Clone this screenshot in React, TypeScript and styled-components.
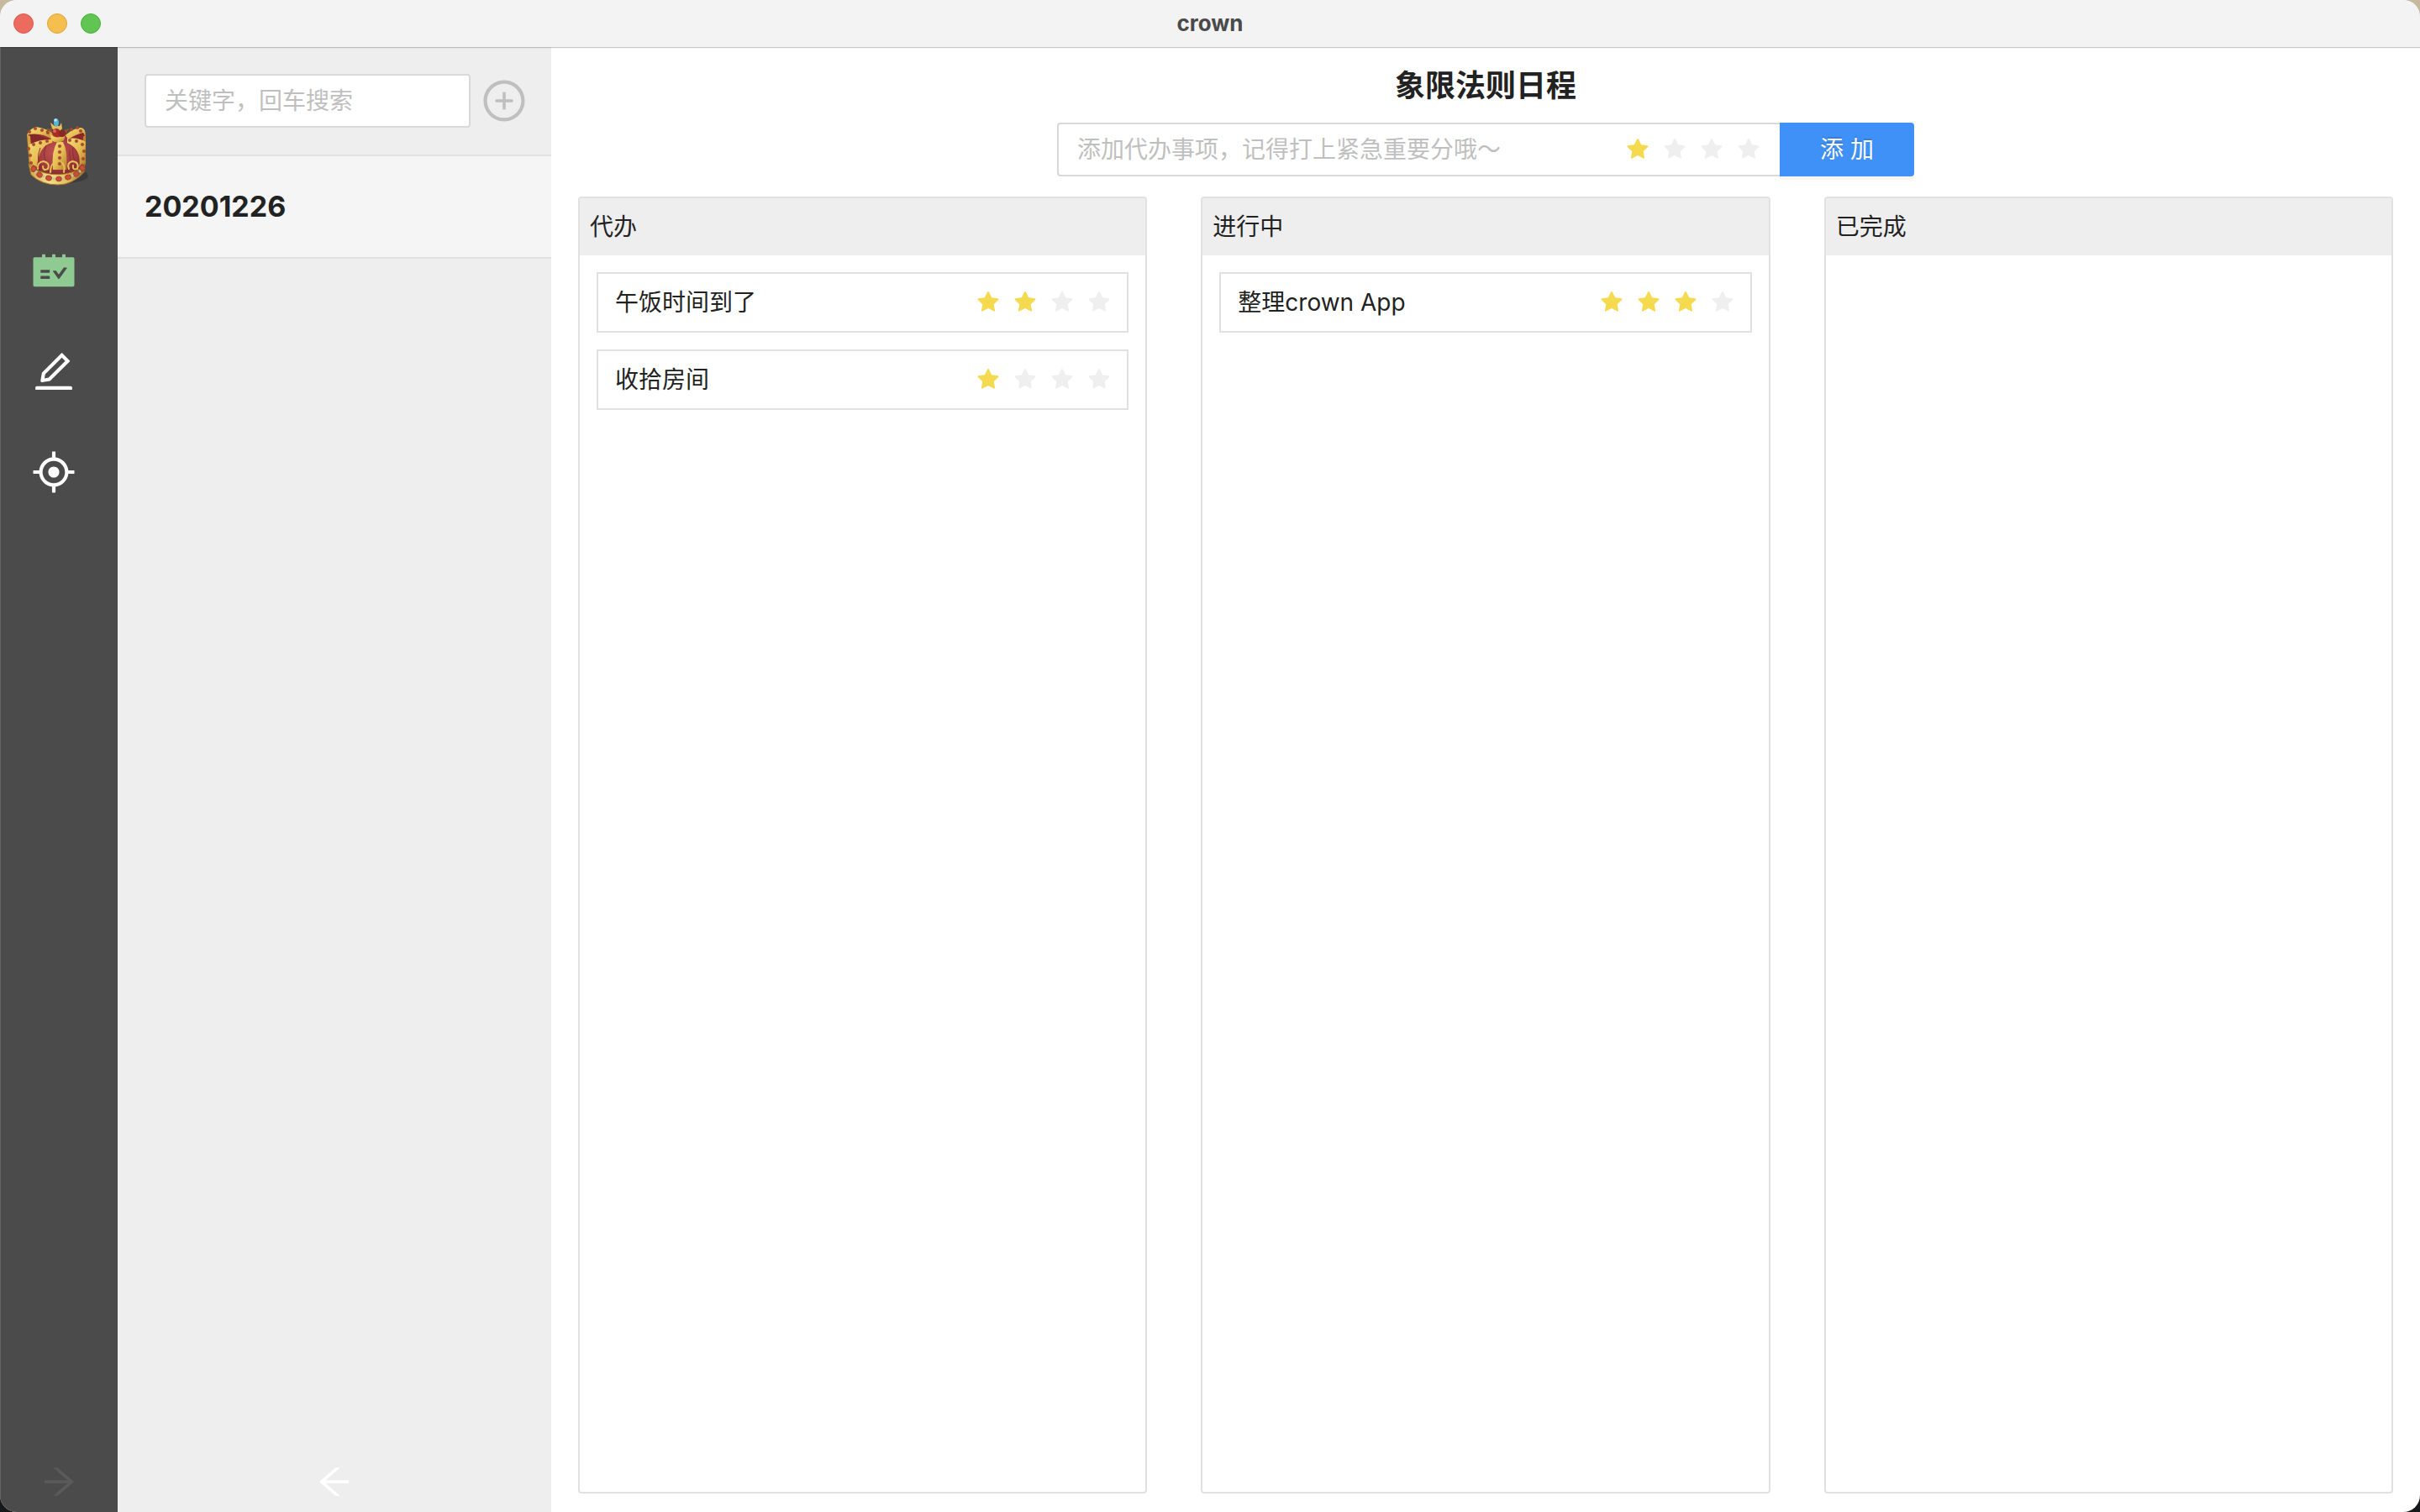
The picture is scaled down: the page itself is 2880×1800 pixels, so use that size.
import React, { useState } from "react";
import styled, { createGlobalStyle } from "styled-components";
import {
  AiFillSchedule,
  AiFillStar,
  AiOutlineAim,
  AiOutlineArrowLeft,
  AiOutlineArrowRight,
  AiOutlineEdit,
  AiOutlinePlusCircle,
} from "react-icons/ai";

const color = {
  text: "#222222",
  muted: "#bfbfbf",
  line: "#e1e1e1",
  inputLine: "#d9d9d9",
  panel: "#eeeeee",
  rail: "#4b4b4b",
  primary: "#4091f7",
  star: "#f5d94e",
  starOff: "#efefef",
  active: "#8fca92",
};

const GlobalStyle = createGlobalStyle`
  *, *::before, *::after { box-sizing: border-box; }
  body {
    margin: 0;
    background: linear-gradient(#c5b9a2 50%, #16181a 50%);
    color: ${color.text};
    font-family: Inter, "Noto Sans CJK SC", sans-serif;
    font-size: 28px;
    line-height: 44px;
  }
  button, input { font: inherit; color: inherit; }
  button { border: 0; padding: 0; background: none; cursor: pointer; }
  h1, h2, p, ul { margin: 0; padding: 0; }
  ul { list-style: none; }
  svg { display: block; }
`;

const Window = styled.div`
  display: flex;
  flex-direction: column;
  height: 100vh;
  overflow: hidden;
  border-radius: 20px;
  background: #ffffff;
`;

const TitleBar = styled.header`
  position: relative;
  display: grid;
  grid-template-columns: 1fr auto 1fr;
  align-items: center;
  flex: none;
  height: 56px;
  padding: 0 16px;
  background: #f3f3f3;
  box-shadow: 0 1px 0 rgba(0, 0, 0, 0.18), 0 2px 0 rgba(0, 0, 0, 0.04);
`;

const Lights = styled.div`
  display: flex;
  gap: 16px;
`;

const Light = styled.button<{ $fill: string; $edge: string }>`
  width: 24px;
  height: 24px;
  border: 1px solid ${(p) => p.$edge};
  border-radius: 50%;
  background: ${(p) => p.$fill};
`;

const WindowTitle = styled.p`
  color: #4a4a4a;
  font-size: 26px;
  font-weight: 700;
`;

const Body = styled.div`
  display: flex;
  flex: 1;
  min-height: 0;
`;

const Rail = styled.nav`
  display: flex;
  flex-direction: column;
  flex: none;
  align-items: flex-start;
  justify-content: space-between;
  width: 140px;
  padding: 82px 0 12px 27px;
  border-left: 1px solid #636363;
  background: ${color.rail};
`;

const RailItems = styled.div`
  display: flex;
  flex-direction: column;
  gap: 64px;
`;

const RailButton = styled.button<{ $active?: boolean }>`
  width: 72px;
  padding: 0 8px;
  color: ${(p) => (p.$active ? color.active : "#ffffff")};
  font-size: 56px;
`;

const Logo = styled.div`
  width: 80px;
  height: 92px;
`;

const Toggle = styled.button<{ $tone: string }>`
  align-self: center;
  color: ${(p) => p.$tone};
  font-size: 48px;
`;

const RailToggle = styled(Toggle)`
  align-self: flex-start;
  margin-left: 18px;
`;

const Side = styled.aside`
  display: flex;
  flex-direction: column;
  flex: none;
  width: 516px;
  padding-bottom: 12px;
  background: ${color.panel};
`;

const SearchBar = styled.form`
  display: flex;
  align-items: center;
  gap: 12px;
  height: 130px;
  padding: 0 28px 0 32px;
  border-bottom: 2px solid ${color.line};
`;

const TextInput = styled.input`
  flex: 1;
  min-width: 0;
  height: 64px;
  padding: 0 22px;
  border: 2px solid ${color.inputLine};
  border-radius: 4px;
  outline: 0;
  background: #ffffff;
  &::placeholder { color: ${color.muted}; opacity: 1; }
`;

const NewButton = styled.button`
  color: ${color.muted};
  font-size: 56px;
`;

const Days = styled.ul`
  flex: 1;
`;

const Day = styled.button`
  display: block;
  width: 100%;
  height: 122px;
  padding: 0 32px;
  border-bottom: 2px solid ${color.line};
  background: #f5f5f5;
  text-align: left;
  font-size: 34px;
  font-weight: 700;
`;

const Main = styled.main`
  display: flex;
  flex: 1;
  flex-direction: column;
  min-width: 0;
  padding: 20px 32px 22px;
`;

const Heading = styled.h1`
  margin-bottom: 18px;
  text-align: center;
  font-size: 36px;
  font-weight: 700;
  line-height: 52px;
`;

const AddForm = styled.form`
  display: flex;
  align-self: center;
  width: 1020px;
  max-width: 100%;
  margin-bottom: 24px;
`;

const AddField = styled.div`
  display: flex;
  flex: 1;
  align-items: center;
  height: 64px;
  padding-right: 22px;
  border: 2px solid ${color.inputLine};
  border-right: 0;
  border-radius: 4px 0 0 4px;
`;

const AddInput = styled(TextInput)`
  height: 60px;
  border: 0;
`;

const AddButton = styled.button`
  width: 160px;
  height: 64px;
  border-radius: 0 4px 4px 0;
  background: ${color.primary};
  box-shadow: 0 4px 0 rgba(0, 0, 0, 0.04);
  color: #ffffff;
  text-shadow: 0 -2px 0 rgba(0, 0, 0, 0.12);
`;

const Board = styled.div`
  display: grid;
  flex: 1;
  grid-template-columns: repeat(3, minmax(0, 1fr));
  gap: 64px;
  min-height: 0;
`;

const Lane = styled.section`
  overflow: hidden;
  border: 2px solid ${color.line};
  border-radius: 4px;
`;

const LaneTitle = styled.h2`
  padding: 12px;
  background: ${color.panel};
  font-size: 28px;
  font-weight: 400;
`;

const Cards = styled.ul`
  display: grid;
  gap: 20px;
  padding: 20px;
`;

const Card = styled.li`
  display: flex;
  align-items: center;
  justify-content: space-between;
  height: 72px;
  padding: 0 18px 0 20px;
  border: 2px solid ${color.line};
`;

const Stars = styled.div`
  display: flex;
  gap: 14px;
`;

const StarButton = styled.button<{ $on: boolean }>`
  color: ${(p) => (p.$on ? color.star : color.starOff)};
  font-size: 30px;
`;

function Rating({ value, onChange }: { value: number; onChange?: (n: number) => void }) {
  return (
    <Stars>
      {[1, 2, 3, 4].map((n) => (
        <StarButton key={n} type="button" $on={n <= value} aria-label={`${n}`} onClick={() => onChange?.(n)}>
          <AiFillStar />
        </StarButton>
      ))}
    </Stars>
  );
}

const beads: [number, number][] = [
  [15, 28], [22, 24], [30, 26], [37, 29], [58, 28], [65, 25], [72, 23], [76, 27],
  [14, 48], [16, 56], [17, 65], [20, 43], [28, 41], [36, 39],
  [51, 45], [51, 52], [51, 59], [51, 66],
  [63, 38], [71, 39], [78, 43], [80, 51], [79, 60], [78, 68],
];

const gems: [number, number, number][] = [
  [20, 72, -60], [27, 79, 35], [38, 83, 15], [50, 84, 0], [61, 82, -15], [71, 78, -35], [78, 71, 60],
];

const pearls: [number, number][] = [[23, 76], [32, 81], [44, 84], [55, 84], [66, 80], [75, 75]];

function Crown() {
  return (
    <svg width="100%" height="100%" viewBox="8 9 80 92" role="img" aria-label="crown">
      <defs>
        <linearGradient id="gold" x1="0" x2="1" y1="0" y2="1">
          <stop offset="0" stopColor="#f3dc7c" />
          <stop offset="0.5" stopColor="#e8bf52" />
          <stop offset="1" stopColor="#b07c2e" />
        </linearGradient>
        <linearGradient id="band" x1="0" x2="1">
          <stop offset="0" stopColor="#d3a141" />
          <stop offset="0.35" stopColor="#f3de8c" />
          <stop offset="0.7" stopColor="#e2bd5c" />
          <stop offset="1" stopColor="#976727" />
        </linearGradient>
        <radialGradient id="velvet" cx="0.5" cy="0.45" r="0.6">
          <stop offset="0" stopColor="#c05552" />
          <stop offset="0.6" stopColor="#a2393c" />
          <stop offset="1" stopColor="#6f2225" />
        </radialGradient>
      </defs>
      <ellipse cx="58" cy="80" rx="27" ry="9" fill="#2f2f2f" opacity="0.55" />
      <path d="M12 31 Q22 24 44 33 L68 29 Q80 23 82 33 L80 72 Q50 92 16 72Z" fill="url(#velvet)" />
      <path d="M14 33 L25 32 L42 37 L17 42Z" fill="#84262a" />
      <path d="M60 35 L81 30 L80 42 L62 37Z" fill="#8f282c" />
      <path d="M12 32 Q14 25 23 22 Q38 24 46 33 L42 37 Q30 29 15 31Z" fill="url(#gold)" />
      <path d="M58 32 Q66 24 76 23 Q82 23 82 34 L79 29 Q70 31 61 37Z" fill="url(#gold)" />
      <path d="M12 31 L16 33 L19 70 L15 69Z" fill="#d5a23c" />
      <path d="M82 31 L79 34 L78 70 L82 66Z" fill="#bd842f" />
      <path d="M15 43 Q28 36 43 37 L42 41 Q26 44 24 70 L17 66Z" fill="url(#gold)" />
      <path d="M60 36 Q73 34 82 40 L80 67 L74 70 Q78 49 60 41Z" fill="url(#gold)" />
      <path d="M48 40 L55 40 Q61 51 59 73 L43 73 Q41 51 48 40Z" fill="url(#gold)" />
      <path d="M28 47 Q22 62 30 70 M35 44 Q29 58 37 67 M67 47 Q65 56 71 66 M63 50 Q62 62 68 70" fill="none" stroke="#862d31" strokeWidth="1" />
      <path d="M14 66 Q20 74 34 77 Q50 81 66 76 Q77 73 81 65 L80 76 Q66 91 49 91 Q29 91 17 79Z" fill="url(#band)" stroke="#a8752b" />
      <path
        d="M25 72 Q24 64 32 63 Q40 65 37 72 Q31 75 31 69 M62 72 Q59 65 66 63 Q75 64 72 72 Q66 74 67 68 M40 76 Q40 66 46 64 M56 76 Q58 66 52 64"
        fill="none"
        stroke="#e6c35c"
        strokeWidth="2"
        strokeLinecap="round"
      />
      <path d="M28 74 Q32 76 36 74 M62 74 Q68 76 72 73" fill="none" stroke="#8b5a1d" />
      {beads.map(([x, y]) => (
        <circle key={`${x}-${y}`} cx={x} cy={y} r="1.8" fill="#b4423a" stroke="#8d4d20" strokeWidth="0.5" />
      ))}
      {gems.map(([x, y, turn]) => (
        <ellipse key={x} cx={x} cy={y} rx="3.4" ry="2.8" fill="#cf4c38" stroke="#9c4528" transform={`rotate(${turn} ${x} ${y})`} />
      ))}
      {pearls.map(([x, y]) => (
        <circle key={x} cx={x} cy={y} r="1.4" fill="#b6c6a4" />
      ))}
      <path d="M35 28 L42 24 M62 25 L57 27 M36 24 L42 28" stroke="#8c5627" strokeWidth="2" />
      <path d="M40 17 L45 21 L51 21 L53 17 L54 24 L49 29 L42 24Z" fill="#e6bf58" />
      <path d="M40 31 Q48 38 58 31 L56 38 Q49 43 41 38Z" fill="url(#gold)" />
      <circle cx="47" cy="29" r="5" fill="#a82b28" />
      <circle cx="54" cy="30" r="4" fill="#8d2624" />
      <circle cx="45" cy="27" r="2" fill="#d8685b" />
      <ellipse cx="47" cy="17" rx="3" ry="5" fill="#57b5da" />
      <circle cx="46" cy="14" r="1.8" fill="#bfe9f5" />
    </svg>
  );
}

const lanes = [
  { title: "代办", items: [{ name: "午饭时间到了", score: 2 }, { name: "收拾房间", score: 1 }] },
  { title: "进行中", items: [{ name: "整理crown App", score: 3 }] },
  { title: "已完成", items: [] },
];

export default function App() {
  const [score, setScore] = useState(1);
  return (
    <>
      <GlobalStyle />
      <Window>
        <TitleBar>
          <Lights>
            <Light $fill="#ed6a5e" $edge="#d95b50" aria-label="close" />
            <Light $fill="#f5bf4f" $edge="#dba63c" aria-label="minimize" />
            <Light $fill="#61c554" $edge="#4fac43" aria-label="zoom" />
          </Lights>
          <WindowTitle>crown</WindowTitle>
        </TitleBar>
        <Body>
          <Rail>
            <RailItems>
              <Logo><Crown /></Logo>
              <RailButton $active aria-label="schedule"><AiFillSchedule /></RailButton>
              <RailButton aria-label="edit"><AiOutlineEdit /></RailButton>
              <RailButton aria-label="aim"><AiOutlineAim /></RailButton>
            </RailItems>
            <RailToggle $tone="#5a5a5a" aria-label="expand"><AiOutlineArrowRight /></RailToggle>
          </Rail>
          <Side>
            <SearchBar onSubmit={(e) => e.preventDefault()}>
              <TextInput placeholder="关键字，回车搜索" aria-label="关键字，回车搜索" />
              <NewButton type="button" aria-label="new"><AiOutlinePlusCircle /></NewButton>
            </SearchBar>
            <Days>
              <li><Day>20201226</Day></li>
            </Days>
            <Toggle $tone="#ffffff" aria-label="collapse"><AiOutlineArrowLeft /></Toggle>
          </Side>
          <Main>
            <Heading>象限法则日程</Heading>
            <AddForm onSubmit={(e) => e.preventDefault()}>
              <AddField>
                <AddInput placeholder="添加代办事项，记得打上紧急重要分哦～" aria-label="添加代办事项" />
                <Rating value={score} onChange={setScore} />
              </AddField>
              <AddButton type="submit">添 加</AddButton>
            </AddForm>
            <Board>
              {lanes.map((lane) => (
                <Lane key={lane.title}>
                  <LaneTitle>{lane.title}</LaneTitle>
                  <Cards>
                    {lane.items.map((item) => (
                      <Card key={item.name}>
                        <span>{item.name}</span>
                        <Rating value={item.score} />
                      </Card>
                    ))}
                  </Cards>
                </Lane>
              ))}
            </Board>
          </Main>
        </Body>
      </Window>
    </>
  );
}
